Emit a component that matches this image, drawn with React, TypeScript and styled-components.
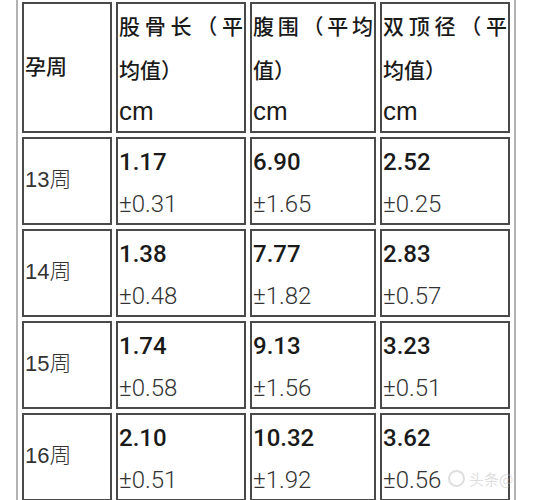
import React from 'react';
import styled, { createGlobalStyle } from 'styled-components';

const Global = createGlobalStyle`
  html, body { margin: 0; padding: 0; background: #fff; }
  body {
    font-family: "Liberation Sans", "Noto Sans CJK SC", sans-serif;
    color: #1c1c1c;
  }
`;

const Page = styled.div`
  position: relative;
  width: 533px;
  height: 500px;
  overflow: hidden;
  background: #fff;
`;

const Table = styled.table`
  margin: -2px 0 0 16px;
  border-collapse: separate;
  border-spacing: 4px;
  border-left: 2px solid #b3b3b3;
  border-right: 2px solid #b3b3b3;
  table-layout: fixed;
  width: 500px;
`;

const Cell = styled.td<{ $w?: number; $top?: boolean }>`
  width: ${p => (p.$w ? `${p.$w}px` : 'auto')};
  box-sizing: border-box;
  border: 2px solid #4a4a4a;
  padding: 0 1px;
  vertical-align: ${p => (p.$top ? 'top' : 'middle')};
  line-height: 42px;
`;

const HeadLine = styled.div<{ $justify?: boolean; $lh: number }>`
  display: block;
  font-family: "Noto Sans CJK SC", sans-serif;
  font-size: 21px;
  font-weight: 500;
  line-height: ${p => p.$lh}px;
  color: #1a1a1a;
  white-space: nowrap;
  text-align: ${p => (p.$justify ? 'justify' : 'left')};
  text-align-last: ${p => (p.$justify ? 'justify' : 'auto')};
`;

const Unit = styled.div`
  font-family: "Liberation Sans", sans-serif;
  font-size: 26px;
  line-height: 39px;
  color: #1a1a1a;
`;

const Label = styled.span<{ $bold?: boolean }>`
  font-family: "Liberation Sans", "Noto Sans CJK SC", sans-serif;
  font-size: ${p => (p.$bold ? 21 : 22)}px;
  font-weight: ${p => (p.$bold ? 500 : 300)};
  color: ${p => (p.$bold ? '#1a1a1a' : '#333')};
`;

const Main = styled.div`
  font-family: "Roboto", "Liberation Sans", sans-serif;
  font-size: 24px;
  font-weight: 500;
  line-height: 46px;
  color: #1a1a1a;
`;

const Dev = styled.div`
  font-family: "Roboto", "Liberation Sans", sans-serif;
  font-size: 24px;
  font-weight: 300;
  line-height: 38px;
  color: #333;
`;

const Watermark = styled.div`
  position: absolute;
  left: 448px;
  top: 468px;
  display: flex;
  align-items: center;
  gap: 4px;
  font-family: "Noto Sans CJK SC", sans-serif;
  font-size: 15px;
  color: rgba(190, 190, 190, 0.5);
  pointer-events: none;
`;

const Dot = styled.span`
  width: 13px;
  height: 13px;
  border-radius: 50%;
  border: 2px solid rgba(190, 190, 190, 0.5);
`;

const headers = [
  { a: '股骨长（平', b: '均值）', w: 130 },
  { a: '腹围（平均', b: '值）', w: 126 },
  { a: '双顶径（平', b: '均值）', w: 130 },
];

const rows = [
  { week: '13周', v: [['1.17', '±0.31'], ['6.90', '±1.65'], ['2.52', '±0.25']] },
  { week: '14周', v: [['1.38', '±0.48'], ['7.77', '±1.82'], ['2.83', '±0.57']] },
  { week: '15周', v: [['1.74', '±0.58'], ['9.13', '±1.56'], ['3.23', '±0.51']] },
  { week: '16周', v: [['2.10', '±0.51'], ['10.32', '±1.92'], ['3.62', '±0.56']] },
];

export default function App() {
  return (
    <Page>
      <Global />
      <Table>
        <tbody>
          <tr>
            <Cell $w={90}>
              <Label $bold>孕周</Label>
            </Cell>
            {headers.map(h => (
              <Cell key={h.a} $w={h.w} $top>
                <HeadLine $justify $lh={42}>{h.a}</HeadLine>
                <HeadLine $lh={46}>{h.b}</HeadLine>
                <Unit>cm</Unit>
              </Cell>
            ))}
          </tr>
          {rows.map(r => (
            <tr key={r.week}>
              <Cell>
                <Label>{r.week}</Label>
              </Cell>
              {r.v.map(([m, d], i) => (
                <Cell key={i} $top>
                  <Main>{m}</Main>
                  <Dev>{d}</Dev>
                </Cell>
              ))}
            </tr>
          ))}
        </tbody>
      </Table>
      <Watermark>
        <Dot />
        <span>头条@</span>
      </Watermark>
    </Page>
  );
}
